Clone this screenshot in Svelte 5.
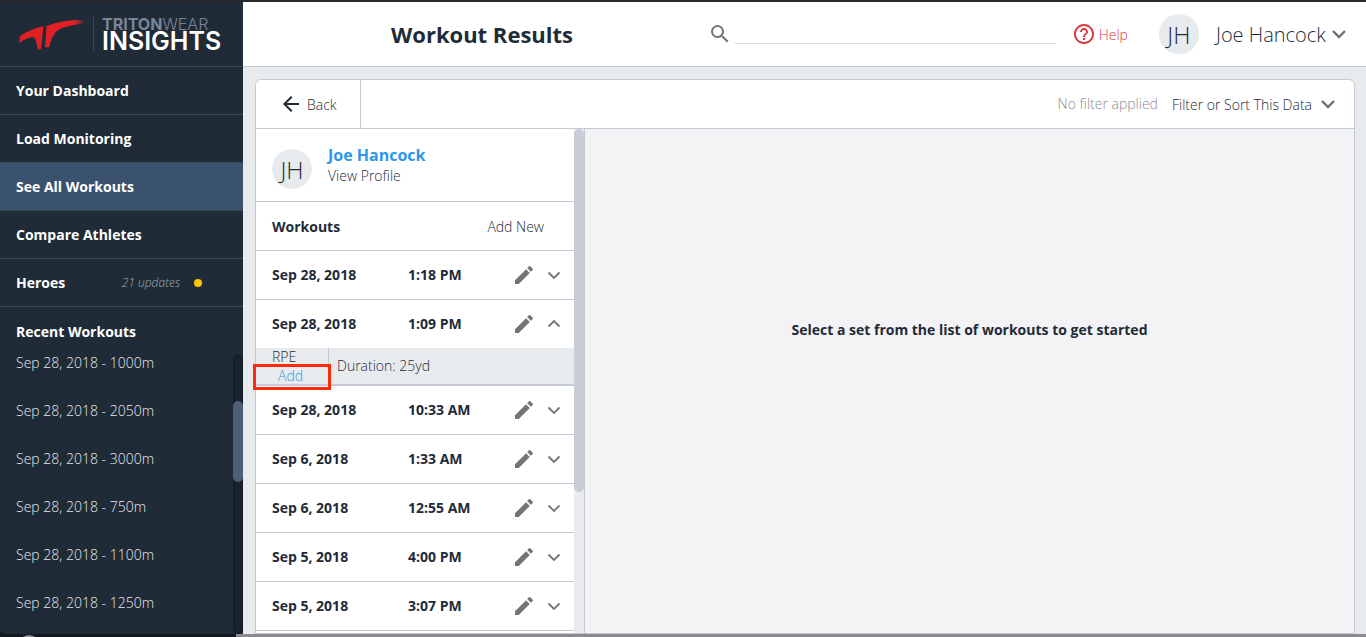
<script>
    const navItems = [
        { label: "Your Dashboard" },
        { label: "Load Monitoring" },
        { label: "See All Workouts", active: true },
        { label: "Compare Athletes" },
        { label: "Heroes", updates: 21 },
    ]

    const recentWorkouts = [
        "Sep 28, 2018 - 1000m",
        "Sep 28, 2018 - 2050m",
        "Sep 28, 2018 - 3000m",
        "Sep 28, 2018 - 750m",
        "Sep 28, 2018 - 1100m",
        "Sep 28, 2018 - 1250m",
    ]

    let workouts = [
        { date: "Sep 28, 2018", time: "1:18 PM", open: false },
        { date: "Sep 28, 2018", time: "1:09 PM", open: true, duration: "25yd" },
        { date: "Sep 28, 2018", time: "10:33 AM", open: false },
        { date: "Sep 6, 2018", time: "1:33 AM", open: false },
        { date: "Sep 6, 2018", time: "12:55 AM", open: false },
        { date: "Sep 5, 2018", time: "4:00 PM", open: false },
        { date: "Sep 5, 2018", time: "3:07 PM", open: false },
    ]

    let search = ""

    function toggle(i) {
        workouts[i].open = !workouts[i].open
    }
</script>

<div class="page">
    <div class="app">
        <aside class="sidebar">
            <div class="logo">
                <svg class="mark" width="66" height="32" viewBox="0 0 66 32">
                    <defs>
                        <linearGradient id="fade" x1="0" x2="1" y1="0" y2="0">
                            <stop offset="0.75" stop-color="#e01f26" />
                            <stop offset="1" stop-color="#e01f26" stop-opacity="0" />
                        </linearGradient>
                    </defs>
                    <path d="M1 18C9 13 16 10 24.500 8L22 31L19 31.500C17.500 26 17 21 15 19.500C12.500 18.300 7 20.500 0 25Z" fill="#e01f26" />
                    <path d="M27.500 8C40 3 53 1.500 66 2L63 6C49 7.500 40 10 36 15C32.500 19 31.500 24 30.500 29L26 29.500Z" fill="url(#fade)" />
                </svg>
                <div class="wordmark">
                    <span class="brand"><b>TRITON</b>WEAR</span>
                    <span class="product">INSIGHTS</span>
                </div>
            </div>
            <nav>
                {#each navItems as item}
                    <a href="#top" class="nav-item" class:active={item.active}>
                        {item.label}
                        {#if item.updates}
                            <span class="updates">{item.updates} updates</span>
                            <span class="dot"></span>
                        {/if}
                    </a>
                {/each}
            </nav>
            <h2>Recent Workouts</h2>
            <div class="recent">
                <ul>
                    {#each recentWorkouts as workout}
                        <li><a href="#top">{workout}</a></li>
                    {/each}
                </ul>
                <div class="track dark"><div class="thumb"></div></div>
            </div>
        </aside>

        <div class="main">
            <header>
                <h1>Workout Results</h1>
                <label class="search">
                    <svg width="24" height="24" viewBox="0 0 24 24" fill="#757575">
                        <path d="M15.500 14h-.79l-.28-.27A6.470 6.470 0 0 0 16 9.500 6.500 6.500 0 1 0 9.500 16c1.610 0 3.090-.59 4.230-1.570l.27.28v.79l5 4.990L20.490 19l-4.990-5zm-6 0C7.010 14 5 11.990 5 9.500S7.010 5 9.500 5 14 7.010 14 9.500 11.990 14 9.500 14z" />
                    </svg>
                    <input type="text" aria-label="Search" bind:value={search}>
                </label>
                <a href="#top" class="help">
                    <svg width="24" height="24" viewBox="0 0 24 24" fill="#d9383f">
                        <path d="M11 18h2v-2h-2v2zm1-16C6.480 2 2 6.480 2 12s4.480 10 10 10 10-4.480 10-10S17.520 2 12 2zm0 18c-4.410 0-8-3.590-8-8s3.590-8 8-8 8 3.590 8 8-3.590 8-8 8zm0-14c-2.210 0-4 1.790-4 4h2c0-1.100.9-2 2-2s2 .9 2 2c0 2-3 1.750-3 5h2c0-2.250 3-2.500 3-5 0-2.210-1.790-4-4-4z" />
                    </svg>
                    Help
                </a>
                <button class="user">
                    <span class="avatar">JH</span>
                    Joe Hancock
                    <svg class="caret" width="14" height="14" viewBox="0 0 14 14"><path d="M1 4L7 10L13 4" /></svg>
                </button>
            </header>

            <div class="card">
                <div class="toolbar">
                    <button class="back">
                        <svg width="24" height="24" viewBox="0 0 24 24" fill="#1f2b37">
                            <path d="M20 11H7.830l5.590-5.590L12 4l-8 8 8 8 1.410-1.410L7.830 13H20v-2z" />
                        </svg>
                        Back
                    </button>
                    <span class="no-filter">No filter applied</span>
                    <button class="filter">
                        Filter or Sort This Data
                        <svg class="caret" width="14" height="14" viewBox="0 0 14 14"><path d="M1 4L7 10L13 4" /></svg>
                    </button>
                </div>

                <div class="content">
                    <section class="list">
                        <div class="profile">
                            <span class="avatar">JH</span>
                            <div class="person">
                                <strong>Joe Hancock</strong>
                                <a href="#top">View Profile</a>
                            </div>
                        </div>
                        <div class="list-head">
                            <h3>Workouts</h3>
                            <button>Add New</button>
                        </div>
                        {#each workouts as workout, i}
                            <div class="row" class:open={workout.open}>
                                <span class="date">{workout.date}</span>
                                <span class="time">{workout.time}</span>
                                <button class="icon" aria-label="Edit">
                                    <svg width="24" height="24" viewBox="0 0 24 24" fill="#757575">
                                        <path d="M3 17.250V21h3.750L17.810 9.940l-3.750-3.750L3 17.250zM20.710 7.040a1 1 0 0 0 0-1.410l-2.340-2.340a1 1 0 0 0-1.410 0l-1.830 1.830 3.750 3.750 1.830-1.830z" />
                                    </svg>
                                </button>
                                <button class="icon" aria-label="Toggle" on:click={() => toggle(i)}>
                                    <svg class="caret thin" class:up={workout.open} width="14" height="14" viewBox="0 0 14 14"><path d="M1.500 4.500L7 10L12.500 4.500" /></svg>
                                </button>
                            </div>
                            {#if workout.open}
                                <div class="detail">
                                    <div class="rpe">
                                        <span>RPE</span>
                                        <button>Add</button>
                                        <span class="highlight"></span>
                                    </div>
                                    <span class="duration">Duration: {workout.duration ?? "-"}</span>
                                </div>
                            {/if}
                        {/each}
                    </section>
                    <div class="track light"><div class="thumb"></div></div>
                    <section class="empty">
                        <p>Select a set from the list of workouts to get started</p>
                    </section>
                </div>
            </div>
        </div>
    </div>
    <div class="desktop">
        <div class="dock"><span></span></div>
    </div>
</div>

<style>
    :global(body) {
        margin: 0;
    }

    .page {
        display: flex;
        flex-direction: column;
        height: 100vh;
        box-sizing: border-box;
        border-top: 2px solid #29292b;
        overflow: hidden;
        font-family: "Open Sans", sans-serif;
        font-size: 14px;
        font-weight: 300;
        color: #1f2b37;
        background: #14191f;
    }

    .app {
        display: flex;
        flex: 1;
        min-height: 0;
    }

    h1, h2, h3, p, ul {
        margin: 0;
        padding: 0;
    }

    a {
        color: inherit;
        text-decoration: none;
    }

    button {
        display: flex;
        align-items: center;
        padding: 0;
        border: 0;
        background: none;
        font: inherit;
        color: inherit;
        cursor: pointer;
    }

    .caret {
        fill: none;
        stroke: #6c6f73;
        stroke-width: 2.4;
    }

    .caret.thin {
        stroke: #757575;
        stroke-width: 1.8;
    }

    .up {
        transform: rotate(180deg);
    }

    .avatar {
        display: flex;
        align-items: center;
        justify-content: center;
        width: 40px;
        height: 40px;
        border-radius: 50%;
        background: #e7ebee;
        font-size: 24px;
    }

    /* sidebar */
    .sidebar {
        display: flex;
        flex-direction: column;
        flex: 0 0 243px;
        background: #1f2b36;
        border-radius: 0 0 0 5px;
        color: #fff;
    }

    .logo {
        display: flex;
        align-items: center;
        height: 64px;
        padding-left: 19px;
        border-bottom: 1px solid #3b4854;
    }

    .wordmark {
        display: flex;
        flex-direction: column;
        margin-left: 8px;
        padding-left: 8px;
        border-left: 1px solid #3b4854;
        font-family: Inter, sans-serif;
    }

    .brand {
        font-size: 16px;
        line-height: 14px;
        color: #798697;
    }

    .brand b {
        font-weight: 700;
    }

    .product {
        font-size: 25px;
        line-height: 20px;
        font-weight: 600;
    }

    .nav-item {
        display: flex;
        align-items: center;
        height: 47px;
        padding-left: 16px;
        border-bottom: 1px solid #3b4854;
        font-weight: 700;
    }

    .active {
        background: #3b526f;
    }

    .updates {
        margin-left: auto;
        font-size: 12px;
        font-style: italic;
        font-weight: 300;
        color: #a3abb3;
    }

    .dot {
        width: 8px;
        height: 8px;
        margin: 0 41px 0 14px;
        border-radius: 50%;
        background: #ffc508;
    }

    h2 {
        padding: 15px 16px 13px;
        font-size: 14px;
        line-height: 20px;
    }

    .recent {
        display: flex;
        flex: 1;
        min-height: 0;
        justify-content: space-between;
    }

    ul {
        display: flex;
        flex-direction: column;
        gap: 32px;
        padding-left: 16px;
        list-style: none;
        line-height: 16px;
        color: #e4e8ec;
    }

    .track {
        flex: 0 0 10px;
    }

    .track.dark {
        border-radius: 5px;
        background: #1c2632;
        box-shadow: inset 0 0 4px #0b1016;
    }

    .dark .thumb {
        height: 29%;
        margin-top: 46px;
        border-radius: 5px;
        background: #4c5f77;
    }

    .track.light {
        background: #e9ebef;
        border-right: 1px solid #c3cad4;
    }

    .light .thumb {
        height: 72%;
        border-radius: 5px;
        background: #c8cdd6;
    }

    /* header */
    .main {
        display: flex;
        flex-direction: column;
        flex: 1;
        min-width: 0;
        background: #e7ebee;
    }

    header {
        display: flex;
        align-items: center;
        height: 64px;
        padding: 0 20px 0 148px;
        border-bottom: 1px solid #c3cad4;
        background: #fff;
    }

    h1 {
        font-size: 22px;
        font-weight: 700;
    }

    .search {
        display: flex;
        align-items: center;
        margin-left: auto;
    }

    .search input {
        width: 322px;
        height: 20px;
        box-sizing: border-box;
        margin-left: 2px;
        padding: 0;
        border: 0;
        border-bottom: 1px solid #dcdfe2;
        outline: none;
        font: inherit;
    }

    .help {
        display: flex;
        align-items: center;
        gap: 3px;
        margin-left: 16px;
        color: #d9383f;
    }

    .user {
        margin-left: 31px;
        font-size: 20px;
    }

    .user .avatar {
        margin-right: 17px;
    }

    .user .caret {
        margin-left: 6px;
    }

    /* results card */
    .card {
        display: flex;
        flex-direction: column;
        flex: 1;
        min-height: 0;
        margin: 12px 11px 0 12px;
        border: 1px solid #c3cad4;
        border-radius: 6px 6px 0 0;
        background: #fff;
    }

    .toolbar {
        display: flex;
        align-items: center;
        height: 48px;
        border-bottom: 1px solid #c3cad4;
    }

    .back {
        gap: 4px;
        height: 48px;
        padding: 0 23px;
        border-right: 1px solid #c3cad4;
    }

    .no-filter {
        margin-left: auto;
        padding-bottom: 2px;
        color: #8a8d91;
    }

    .filter {
        gap: 9px;
        margin: 0 19px 0 14px;
    }

    .content {
        display: flex;
        flex: 1;
        min-height: 0;
    }

    .list {
        flex: 0 0 318px;
        overflow-x: visible;
        overflow-y: clip;
    }

    .profile {
        display: flex;
        align-items: center;
        gap: 16px;
        height: 72px;
        padding: 0 16px;
        border-bottom: 1px solid #c3cad4;
    }

    .profile .avatar {
        margin-top: 8px;
    }

    .person {
        padding-bottom: 2px;
    }

    .person strong {
        display: block;
        font-size: 16px;
        line-height: 22px;
        font-weight: 700;
        color: #2d96e8;
    }

    .list-head {
        display: flex;
        align-items: center;
        justify-content: space-between;
        height: 48px;
        padding: 0 30px 0 16px;
        border-bottom: 1px solid #c3cad4;
    }

    h3 {
        font-size: 14px;
    }

    .row {
        display: flex;
        align-items: center;
        height: 48px;
        padding: 0 13px 0 16px;
        border-bottom: 1px solid #c3cad4;
        font-weight: 700;
    }

    .row.open {
        border-bottom: 0;
    }

    .date,
    .time,
    .duration {
        padding-bottom: 2px;
    }

    .date {
        width: 136px;
    }

    .time {
        flex: 1;
    }

    .row .icon + .icon {
        margin-left: 11px;
    }

    .detail {
        display: flex;
        align-items: center;
        height: 36px;
        border-bottom: 2px solid #c3cad4;
        background: #e7ebee;
    }

    .rpe {
        position: relative;
        width: 56px;
        padding-left: 16px;
        border-right: 1px solid #c3cad4;
        line-height: 18px;
    }

    .rpe button {
        margin-left: 6px;
        padding-top: 1px;
        color: #2d96e8;
    }

    .highlight {
        position: absolute;
        left: -3px;
        top: 16px;
        width: 72px;
        height: 20px;
        border: 3px solid #fa2a0a;
        pointer-events: none;
    }

    .duration {
        padding-left: 8px;
    }

    .empty {
        display: flex;
        flex: 1;
        justify-content: center;
        background: #f3f3f5;
    }

    .empty p {
        padding-top: 191px;
        font-weight: 700;
    }

    /* strip of desktop under the window */
    .desktop {
        height: 3px;
        background: #8b8a8c;
    }

    .dock {
        width: 236px;
        height: 3px;
        overflow: hidden;
        background: #14191f;
    }

    .dock span {
        display: block;
        width: 20px;
        height: 20px;
        margin: 1px 0 0 19px;
        border-radius: 50%;
        background: #8b8a8c;
    }
</style>
